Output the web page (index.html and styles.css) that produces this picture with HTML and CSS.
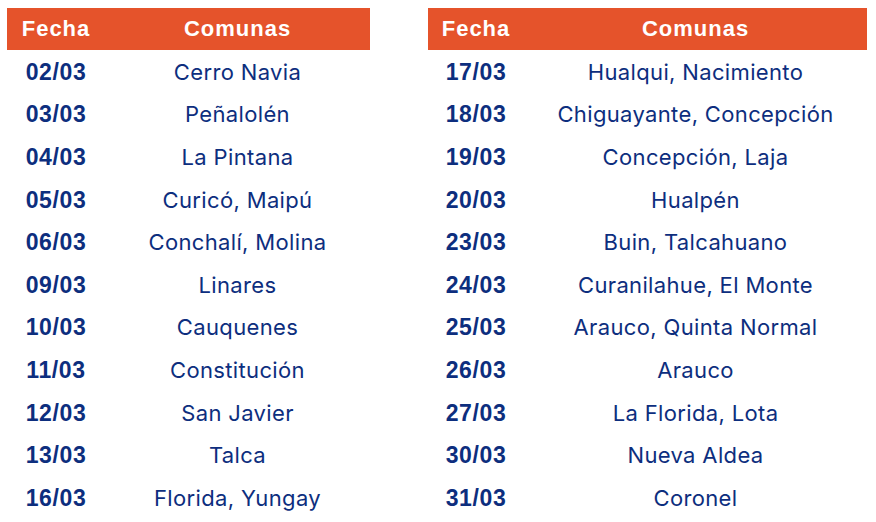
FILE: index.html
```html
<!DOCTYPE html>
<html lang="es">
<head>
<meta charset="utf-8">
<link rel="stylesheet" href="styles.css">
</head>
<body>
<div class="page">
  <div class="tbl tbl-left">
    <div class="hd">Fecha</div><div class="hd">Comunas</div>
    <div class="d">02/03</div><div class="c">Cerro Navia</div>
    <div class="d">03/03</div><div class="c">Peñalolén</div>
    <div class="d">04/03</div><div class="c">La Pintana</div>
    <div class="d">05/03</div><div class="c">Curicó, Maipú</div>
    <div class="d">06/03</div><div class="c">Conchalí, Molina</div>
    <div class="d">09/03</div><div class="c">Linares</div>
    <div class="d">10/03</div><div class="c">Cauquenes</div>
    <div class="d">11/03</div><div class="c">Constitución</div>
    <div class="d">12/03</div><div class="c">San Javier</div>
    <div class="d">13/03</div><div class="c">Talca</div>
    <div class="d">16/03</div><div class="c">Florida, Yungay</div>
  </div>
  <div class="tbl tbl-right">
    <div class="hd">Fecha</div><div class="hd">Comunas</div>
    <div class="d">17/03</div><div class="c">Hualqui, Nacimiento</div>
    <div class="d">18/03</div><div class="c">Chiguayante, Concepción</div>
    <div class="d">19/03</div><div class="c">Concepción, Laja</div>
    <div class="d">20/03</div><div class="c">Hualpén</div>
    <div class="d">23/03</div><div class="c">Buin, Talcahuano</div>
    <div class="d">24/03</div><div class="c">Curanilahue, El Monte</div>
    <div class="d">25/03</div><div class="c">Arauco, Quinta Normal</div>
    <div class="d">26/03</div><div class="c">Arauco</div>
    <div class="d">27/03</div><div class="c">La Florida, Lota</div>
    <div class="d">30/03</div><div class="c">Nueva Aldea</div>
    <div class="d">31/03</div><div class="c">Coronel</div>
  </div>
</div>
</body>
</html>
```
FILE: styles.css
```css
html, body {
  margin: 0;
  padding: 0;
  background: #ffffff;
}
.page {
  display: flex;
  gap: 58px;
  padding: 8px 0 0 7px;
}
.tbl {
  display: grid;
  grid-template-rows: 42px repeat(11, 42.6px);
  align-items: center;
  justify-items: center;
}
.tbl-left {
  width: 363px;
  grid-template-columns: 98px 1fr;
}
.tbl-right {
  width: 439px;
  grid-template-columns: 96px 1fr;
}
.hd {
  align-self: stretch;
  justify-self: stretch;
  display: flex;
  align-items: center;
  justify-content: center;
  background: #e5532b;
  color: #ffffff;
  font-family: "Liberation Sans", Arial, sans-serif;
  font-weight: 700;
  font-size: 22px;
  letter-spacing: 1px;
}
.d {
  color: #0d2e7e;
  font-family: "Liberation Sans", Arial, sans-serif;
  font-weight: 700;
  font-size: 23px;
  letter-spacing: 0.6px;
  padding-top: 2px;
}
.c {
  color: #0d2e7e;
  font-family: "Inter", sans-serif;
  font-weight: 400;
  font-size: 22px;
  letter-spacing: 0.35px;
  padding-top: 1px;
}
```
